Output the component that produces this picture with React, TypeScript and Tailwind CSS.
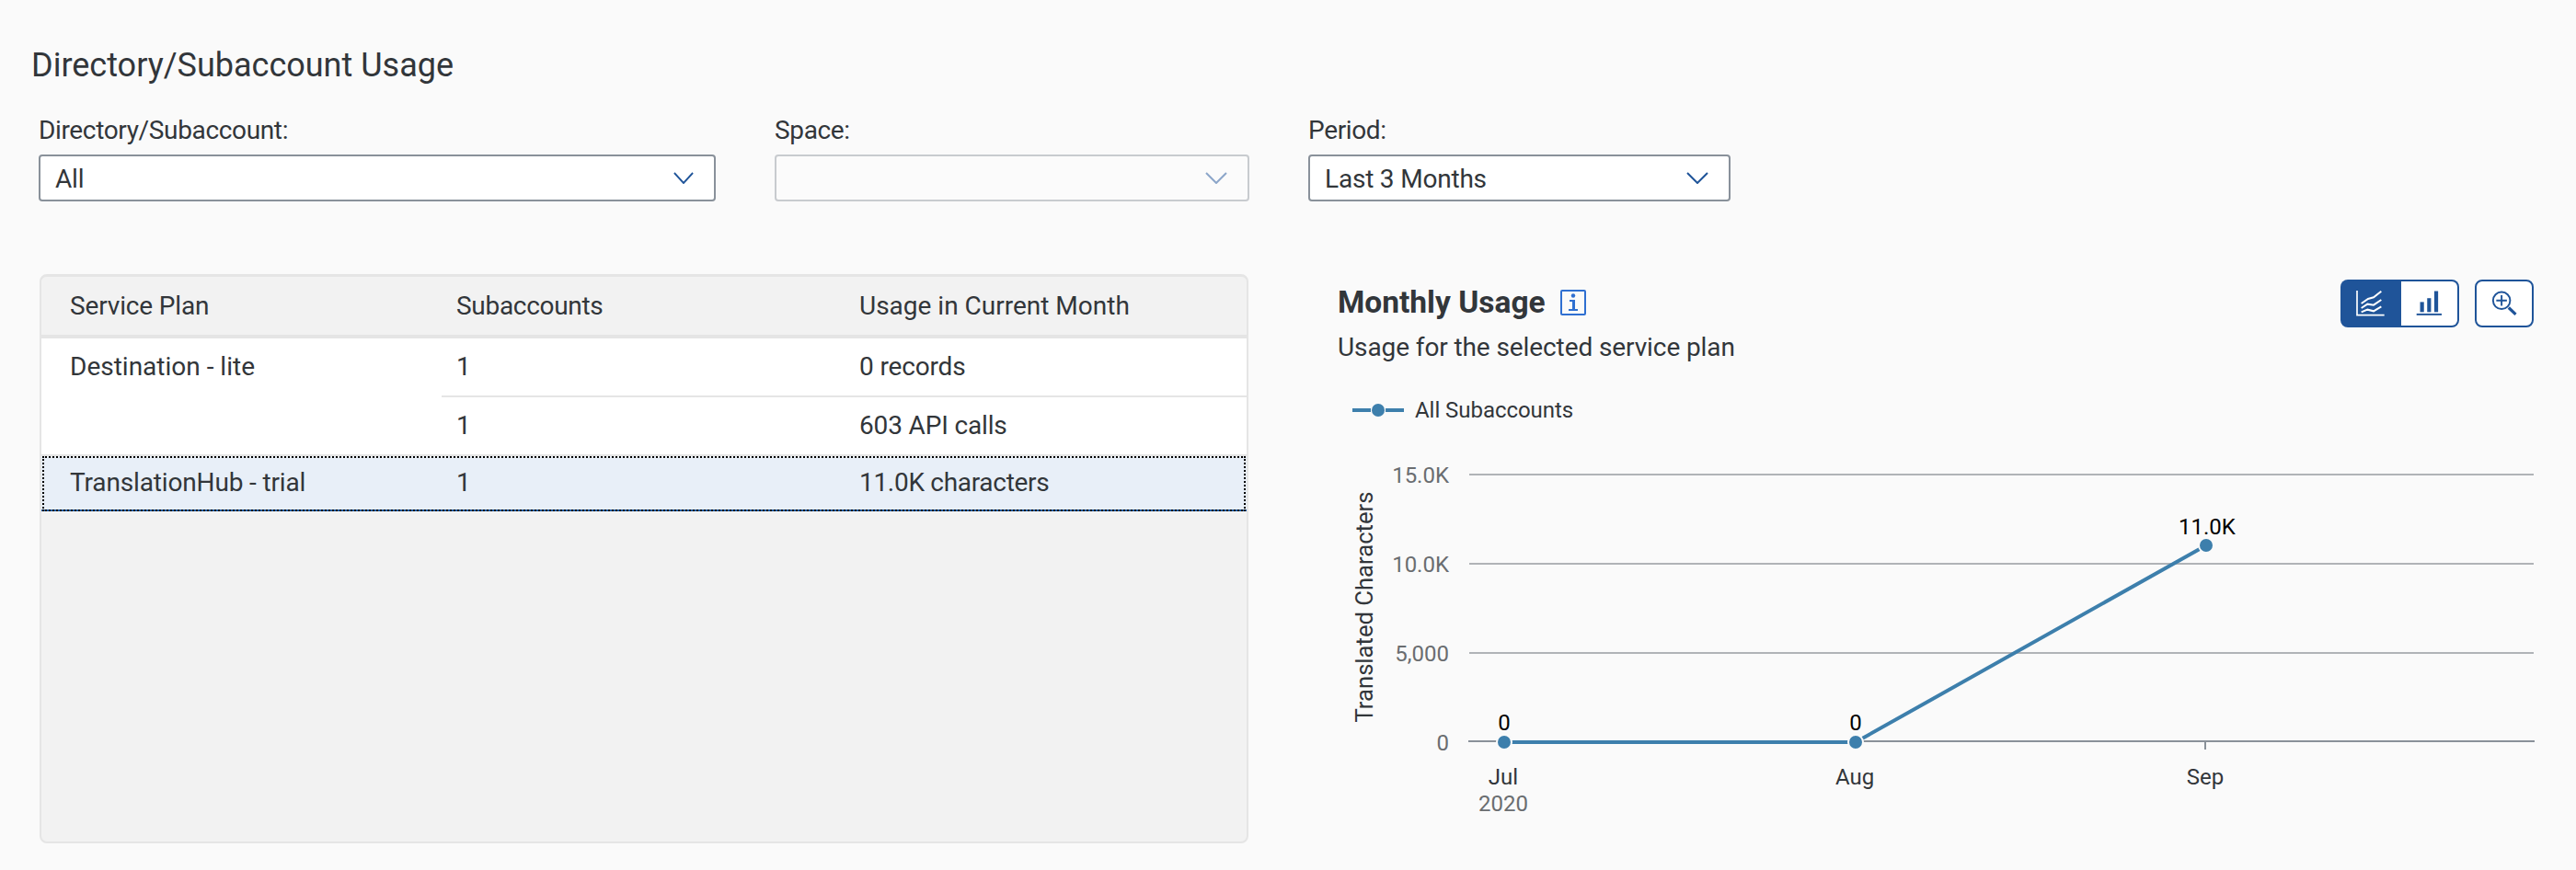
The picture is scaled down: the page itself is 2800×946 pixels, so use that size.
const font = { fontFamily: 'Roboto, sans-serif' };

function Chevron({ size = 24, faded = false }: { size?: number; faded?: boolean }) {
  return (
    <svg width={size} height={13} viewBox="0 0 24 13" preserveAspectRatio="none" fill="none" className={faded ? "opacity-50" : ""}>
      <path d="M1 1 L12 12 L23 1" stroke="#1f5499" strokeWidth="2" />
    </svg>
  );
}

function SelectBox({ label, value, width, faded, arrow }: { label: string; value?: string; width: string; faded?: boolean; arrow?: number }) {
  return (
    <div className={`flex flex-col ${width}`}>
      <div className="h-[46px] pt-[2px] text-[28px] leading-[36px] tracking-[-0.35px] text-[#32363a]">{label}</div>
      <div className={`h-[51px] flex items-center justify-between pl-4 pr-[22px] rounded-[4px] border-2 text-[28px] tracking-[-0.2px] text-[#32363a] ${faded ? "border-[#c8cbcf] bg-[#fbfbfb]" : "border-[#89919a] bg-white"}`}>
        <span className="pt-[2px]">{value}</span>
        <Chevron size={arrow} faded={faded} />
      </div>
    </div>
  );
}

function LineIcon() {
  return (
    <svg width="66" height="52" viewBox="192 72 198 156" fill="none" stroke="#fff" strokeWidth="6">
      <path d="M246 108 V188 H335" strokeWidth="5" />
      <path d="M260 150 L282 135 L300 130 L325 110" />
      <path d="M260 165 L280 152 L300 155 L325 138" />
      <path d="M260 178 L280 170 L300 175 L325 160" />
    </svg>
  );
}

function BarIcon() {
  return (
    <svg width="63" height="52" viewBox="390 72 190 156" fill="#1f5499">
      <rect x="454" y="145" width="13" height="34" />
      <rect x="478" y="132" width="13" height="47" />
      <rect x="502" y="108" width="13" height="71" />
      <rect x="442" y="184" width="85" height="6" />
    </svg>
  );
}

function ZoomIcon() {
  return (
    <svg width="60" height="48" viewBox="636 75 178 150" fill="none" stroke="#1f5499">
      <circle cx="716" cy="140" r="29" strokeWidth="6" />
      <path d="M698 140 H734 M716 122 V158" strokeWidth="6" />
      <path d="M740 164 L764 187" strokeWidth="10" />
    </svg>
  );
}

function UsageChart() {
  const axis = { fontSize: 24, fill: "#6a6d70" };
  const tick = { fontSize: 24, fill: "#32363a", textAnchor: "middle" as const };
  const value = { fontSize: 24, fill: "#000", textAnchor: "middle" as const };
  return (
    <svg width="1345" height="430" viewBox="1420 490 1345 430" style={font}>
      {[516, 613, 710].map((y) => (
        <line key={y} x1="1597" x2="2754" y1={y} y2={y} stroke="#b0b3b7" strokeWidth="2" />
      ))}
      <line x1="1596" x2="2755" y1="806" y2="806" stroke="#899199" strokeWidth="2" />
      {[1634, 2016, 2397].map((x) => (
        <line key={x} x1={x} x2={x} y1="806" y2="815" stroke="#899199" strokeWidth="2" />
      ))}
      <text x="1575" y="525" textAnchor="end" {...axis}>15.0K</text>
      <text x="1575" y="622" textAnchor="end" {...axis}>10.0K</text>
      <text x="1575" y="719" textAnchor="end" {...axis}>5,000</text>
      <text x="1575" y="816" textAnchor="end" {...axis}>0</text>
      <text transform="translate(1492 660) rotate(-90)" textAnchor="middle" fontSize="25" fill="#32363a" textLength="251" lengthAdjust="spacingAndGlyphs">Translated Characters</text>
      <polyline points="1635,807 2017,807 2398,593" fill="none" stroke="#3d7fac" strokeWidth="4" />
      {[[1635, 807], [2017, 807], [2398, 593]].map(([x, y]) => (
        <circle key={x} cx={x} cy={y} r="8" fill="#3d7fac" stroke="#fafafa" strokeWidth="2" />
      ))}
      <text x="1635" y="794" {...value}>0</text>
      <text x="2017" y="794" {...value}>0</text>
      <text x="2399" y="581" {...value}>11.0K</text>
      <text x="1634" y="853" {...tick}>Jul</text>
      <text x="2016" y="853" {...tick}>Aug</text>
      <text x="2397" y="853" {...tick}>Sep</text>
      <text x="1634" y="882" textAnchor="middle" {...axis}>2020</text>
    </svg>
  );
}

export default function App() {
  return (
    <div className="w-[2800px] h-[946px] bg-[#fafafa] text-[#32363a] overflow-hidden" style={font}>
      <h1 className="pt-[49px] pl-[34px] text-[36px] leading-[44px]">Directory/Subaccount Usage</h1>

      <div className="flex mt-[29px] ml-[42px] gap-[64px]">
        <SelectBox label="Directory/Subaccount:" value="All" width="w-[736px]" arrow={22} />
        <SelectBox label="Space:" width="w-[516px]" faded />
        <SelectBox label="Period:" value="Last 3 Months" width="w-[459px]" />
      </div>

      <div className="flex mt-[79px] ml-[43px]">
        <div className="w-[1314px] h-[619px] bg-[#f2f2f2] border-2 border-t-[3px] border-[#e5e5e5] rounded-[8px] overflow-hidden text-[28px] tracking-[-0.15px]">
          <div className="flex h-[63px] items-center border-b-4 border-[#e5e5e5] box-content">
            <div className="w-[435px] pl-[31px]">Service Plan</div>
            <div className="w-[438px] pl-[16px] tracking-[-0.3px]">Subaccounts</div>
            <div className="pl-[16px] tracking-normal">Usage in Current Month</div>
          </div>
          <div className="flex bg-white">
            <div className="w-[435px] pl-[31px] pt-[13px] leading-[36px] tracking-normal">Destination - lite</div>
            <div className="flex-1">
              <div className="flex items-center h-[62px] border-b-2 border-[#e5e5e5] box-content">
                <div className="w-[438px] pl-[16px]">1</div>
                <div className="pl-[16px]">0 records</div>
              </div>
              <div className="flex items-center h-[62px]">
                <div className="w-[438px] pl-[16px]">1</div>
                <div className="pl-[16px]">603 API calls</div>
              </div>
            </div>
          </div>
          <div className="border-t-2 border-[#e5e5e5]">
            <div className="relative flex items-center h-[60px] bg-[#e8eff8] border-b-2 border-[#1f5ea8]">
              <div className="w-[435px] pl-[31px]">TranslationHub - trial</div>
              <div className="w-[438px] pl-[16px]">1</div>
              <div className="pl-[16px] tracking-[-0.3px]">11.0K characters</div>
              <div className="absolute top-0 left-[1px] right-[1px] -bottom-[2px] border-2 border-dotted border-[#000]" />
            </div>
          </div>
        </div>

        <div className="w-[1299px] ml-[98px]">
          <div className="flex justify-between items-start pt-[6px]">
            <div className="-ml-[1px]">
              <div className="flex items-center gap-[16px] h-[50px]">
                <span className="text-[33.5px] font-bold">Monthly Usage</span>
                <span className="w-[28px] h-[28px] rounded-[2px] border-2 border-[#2e6fd1] flex items-center justify-center">
                  <svg width="12" height="20" viewBox="0 0 12 20" fill="#2e6fd1">
                    <circle cx="6" cy="2.5" r="2.2" />
                    <path d="M2 7 H8 V17 H11 V19 H1 V17 H5 V9 H2 Z" />
                  </svg>
                </span>
              </div>
              <div className="mt-[6px] text-[28px] leading-[36px] tracking-[-0.1px]">Usage for the selected service plan</div>
            </div>
            <div className="flex items-center gap-[17px]">
              <div className="flex">
                <button className="w-[66px] h-[52px] bg-[#1f5499] rounded-l-[8px] flex items-center justify-center"><LineIcon /></button>
                <button className="w-[63px] h-[52px] bg-white border-2 border-l-0 border-[#1f5499] rounded-r-[8px] flex items-center justify-center"><BarIcon /></button>
              </div>
              <button className="w-[64px] h-[52px] bg-white border-2 border-[#1f5499] rounded-[8px] flex items-center justify-center"><ZoomIcon /></button>
            </div>
          </div>
          <div className="flex items-center mt-[32px] ml-[15px] h-[36px]">
            <svg width="56" height="16" viewBox="0 0 56 16" className="mr-[12px]">
              <path d="M0 8 H20 M36 8 H56" stroke="#3d7fac" strokeWidth="4" />
              <circle cx="28" cy="8" r="7" fill="#3d7fac" />
            </svg>
            <span className="text-[24px] tracking-[-0.05px]">All Subaccounts</span>
          </div>
          <div className="-ml-[35px] mt-[26px]">
            <UsageChart />
          </div>
        </div>
      </div>
    </div>
  );
}
